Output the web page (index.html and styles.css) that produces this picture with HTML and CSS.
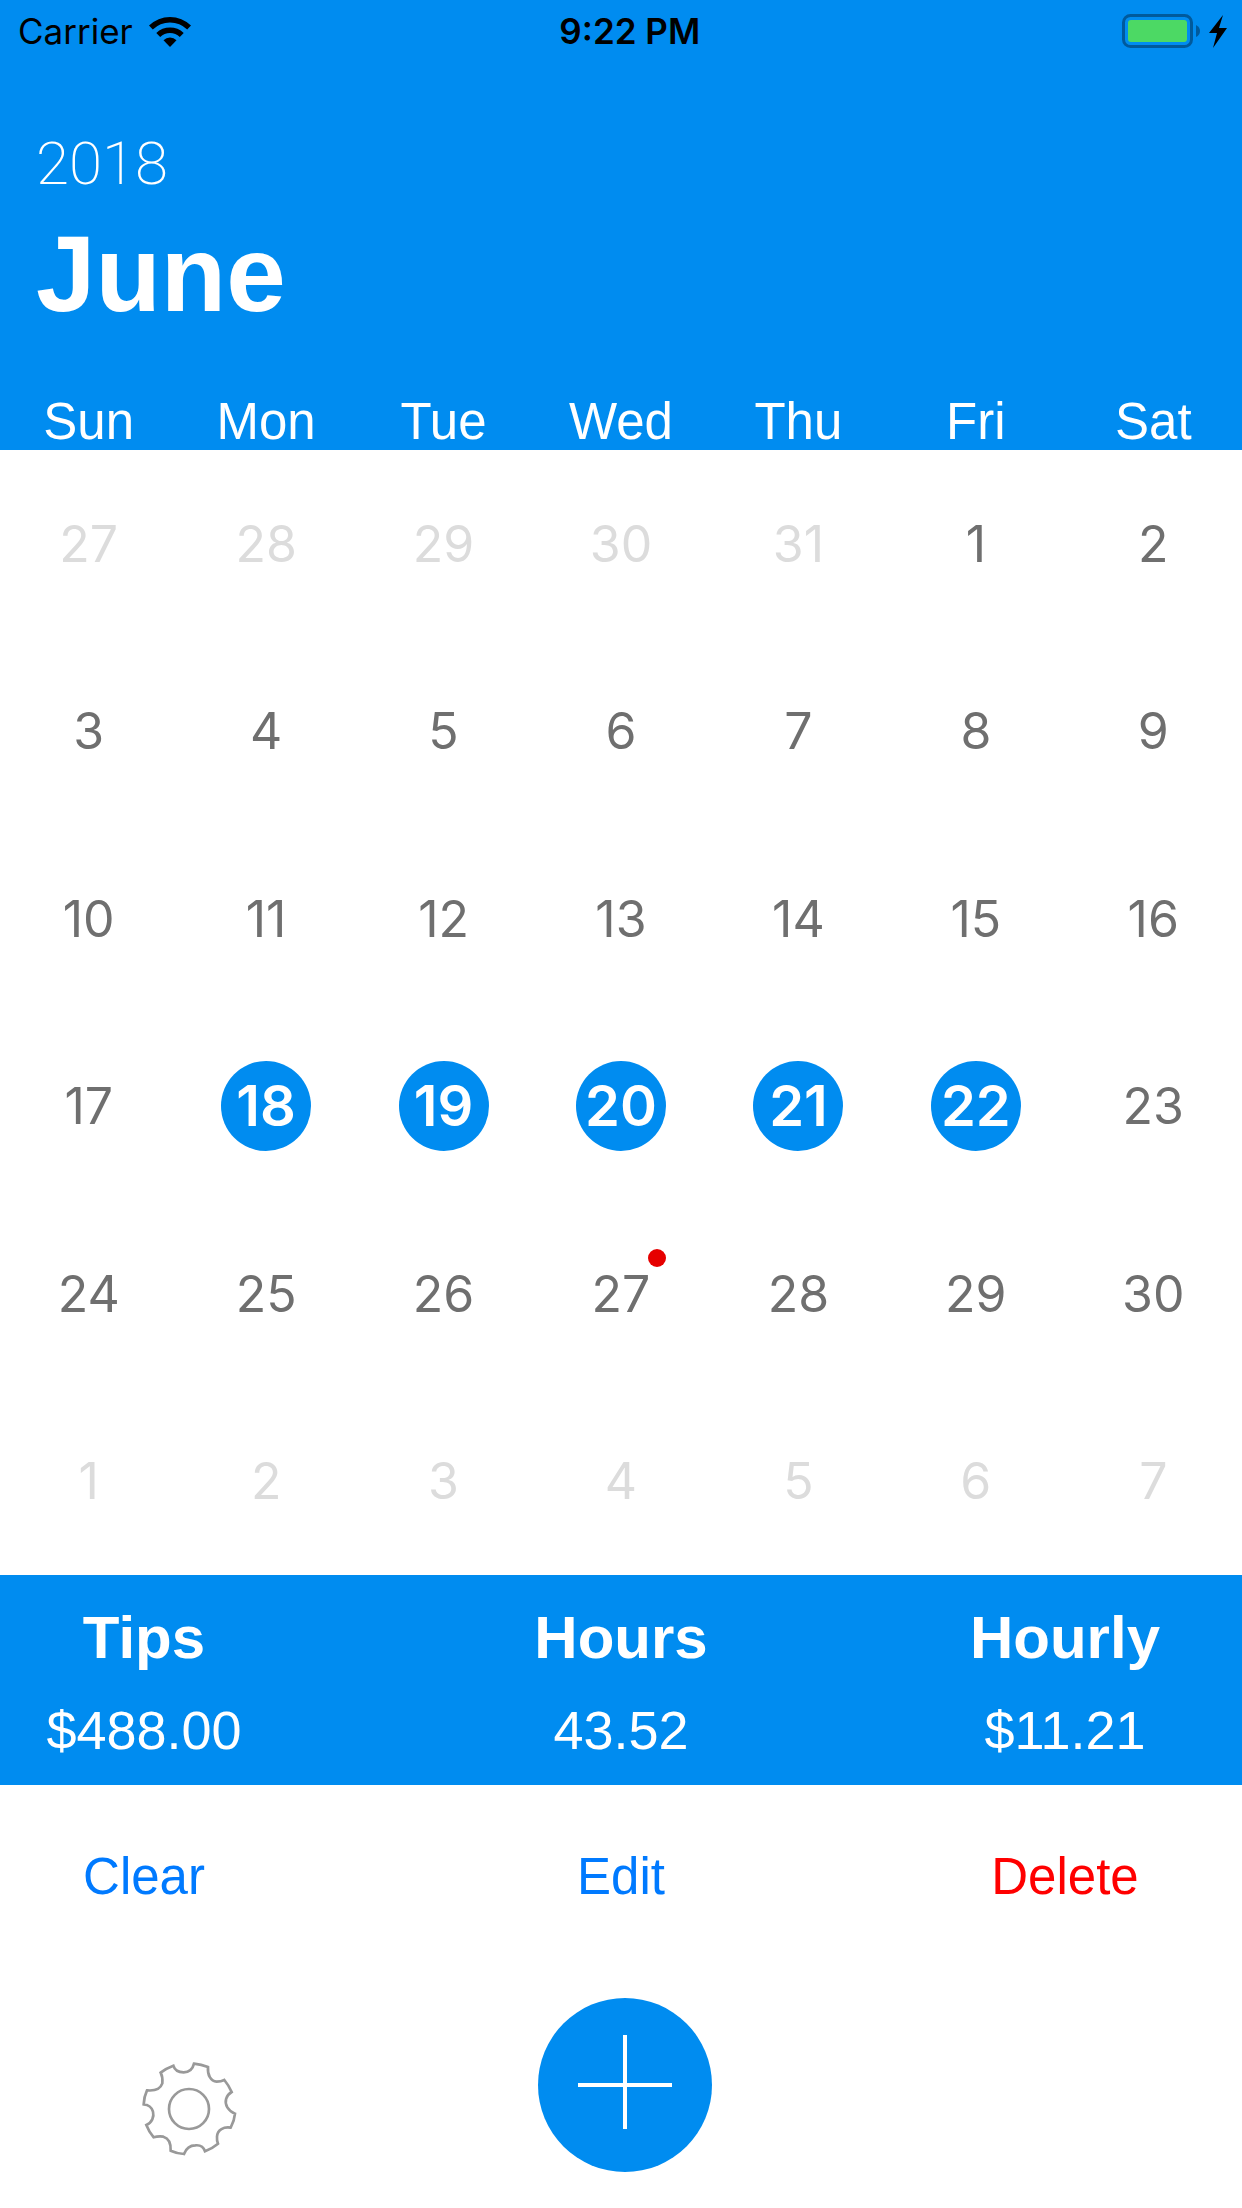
FILE: index.html
```html
<!DOCTYPE html>
<html lang="en">
<head>
<meta charset="utf-8">
<meta name="viewport" content="width=device-width, initial-scale=1">
<title>June 2018</title>
<link rel="stylesheet" href="styles.css">
</head>
<body>
<header class="top">
  <div class="status">
    <div class="status-left">
      <span>Carrier</span>
      <svg class="wifi" viewBox="0 0 42 31" aria-hidden="true">
        <path d="M0 9.500A30 30 0 0 1 42 9.500L38.200 13.500A24.500 24.500 0 0 0 3.800 13.500Z"/>
        <path d="M7.300 17A19.500 19.500 0 0 1 34.700 17L30.800 21A14 14 0 0 0 11.200 21Z"/>
        <path d="M14.500 24.200A9.300 9.300 0 0 1 27.500 24.200L21 31Z"/>
      </svg>
    </div>
    <time class="clock">9:22 PM</time>
    <div class="status-right">
      <svg class="battery" viewBox="0 0 106 36" aria-hidden="true">
        <rect x="1.500" y="2.500" width="68" height="31" rx="7" fill="none" stroke="#005a9c" stroke-width="3"/>
        <rect x="6" y="7" width="59" height="22" rx="3" fill="#4cd964"/>
        <path d="M74 12Q78 14 78 18T74 24Z" fill="#005a9c"/>
        <path d="M101 2L87 20H95L91 35L105 15H97Z"/>
      </svg>
    </div>
  </div>
  <div class="titles">
    <p class="year">2018</p>
    <h1 class="month">June</h1>
  </div>
</header>
<main class="main">
  <table class="calendar">
    <thead>
      <tr><th>Sun</th><th>Mon</th><th>Tue</th><th>Wed</th><th>Thu</th><th>Fri</th><th>Sat</th></tr>
    </thead>
    <tbody>
      <tr class="week">
        <td><button class="day other">27</button></td><td><button class="day other">28</button></td><td><button class="day other">29</button></td><td><button class="day other">30</button></td><td><button class="day other">31</button></td><td><button class="day">1</button></td><td><button class="day">2</button></td>
      </tr>
      <tr class="week">
        <td><button class="day">3</button></td><td><button class="day">4</button></td><td><button class="day">5</button></td><td><button class="day">6</button></td><td><button class="day">7</button></td><td><button class="day">8</button></td><td><button class="day">9</button></td>
      </tr>
      <tr class="week">
        <td><button class="day">10</button></td><td><button class="day">11</button></td><td><button class="day">12</button></td><td><button class="day">13</button></td><td><button class="day">14</button></td><td><button class="day">15</button></td><td><button class="day">16</button></td>
      </tr>
      <tr class="week">
        <td><button class="day">17</button></td><td><button class="day selected">18</button></td><td><button class="day selected">19</button></td><td><button class="day selected">20</button></td><td><button class="day selected">21</button></td><td><button class="day selected">22</button></td><td><button class="day">23</button></td>
      </tr>
      <tr class="week">
        <td><button class="day">24</button></td><td><button class="day">25</button></td><td><button class="day">26</button></td><td><button class="day marked">27</button></td><td><button class="day">28</button></td><td><button class="day">29</button></td><td><button class="day">30</button></td>
      </tr>
      <tr class="week">
        <td><button class="day other">1</button></td><td><button class="day other">2</button></td><td><button class="day other">3</button></td><td><button class="day other">4</button></td><td><button class="day other">5</button></td><td><button class="day other">6</button></td><td><button class="day other">7</button></td>
      </tr>
    </tbody>
  </table>
  <dl class="totals thirds">
    <div class="total"><dt>Tips</dt><dd>$488.00</dd></div>
    <div class="total"><dt>Hours</dt><dd>43.52</dd></div>
    <div class="total"><dt>Hourly</dt><dd>$11.21</dd></div>
  </dl>
  <div class="actions thirds">
    <button class="action">Clear</button>
    <button class="action">Edit</button>
    <button class="action danger">Delete</button>
  </div>
</main>
<footer class="toolbar">
  <button class="settings" aria-label="Settings">
    <svg viewBox="60 60 294 294" aria-hidden="true">
      <g fill="none" stroke="#999" stroke-width="8">
        <path d="M222 71Q244 73 264 81C262 105 272 124 290 125Q303 125 313 120Q327 137 335 156C318 166 312 186 322 202Q331 216 345 221Q343 243 332 263C312 260 292 268 291 290Q290 302 294 311Q276 326 255 334C250 318 236 315 226 316C210 316 198 326 192 342Q172 341 152 332C153 312 150 296 130 290Q115 288 101 292Q87 276 79 255C96 248 103 230 99 215C96 202 84 194 71 193Q72 170 81 151C102 153 120 150 127 130Q129 112 122 98Q140 84 160 77C165 94 180 97 191 97C207 97 218 88 222 71Z"/>
        <circle cx="207" cy="207" r="60"/>
      </g>
    </svg>
  </button>
  <button class="add" aria-label="Add shift">
    <svg viewBox="0 0 100 100" aria-hidden="true"><path d="M50 0V94M3 50H97" stroke="#fff" stroke-width="4"/></svg>
  </button>
</footer>
</body>
</html>
```

FILE: styles.css
```css
* {
  box-sizing: border-box;
  margin: 0;
  padding: 0;
}

:root {
  --blue: #008cf0;
  --sans: "Liberation Sans", Arial, sans-serif;
  --ui: Inter, "Liberation Sans", sans-serif;
}

body {
  display: flex;
  flex-direction: column;
  min-height: 100vh;
  background: #fff;
  font-family: var(--sans);
  font-size: 51px;
}

button {
  border: 0;
  background: none;
  font: inherit;
  color: inherit;
  cursor: pointer;
}

svg {
  display: block;
}

/* Header */
.top {
  background: var(--blue);
  color: #fff;
}

.status {
  display: grid;
  grid-template-columns: 40fr auto 39fr;
  align-items: center;
  height: 60px;
  padding: 0 14px 0 18px;
  font: 400 35px/62px var(--ui);
  color: #000;
}

.status-left {
  display: flex;
  align-items: center;
  gap: 16px;
}

.status-right {
  display: flex;
  justify-content: flex-end;
}

.wifi {
  width: 42px;
  height: 31px;
}

.battery {
  width: 106px;
  height: 36px;
}

.clock {
  font-weight: 600;
}

.titles {
  padding: 68px 36px 56px;
}

.year {
  margin-bottom: 12px;
  font: 200 60px/72px Roboto, sans-serif;
}

.month {
  font-size: 107px;
  line-height: 124px;
}

/* Calendar */
.main {
  display: flex;
  flex-direction: column;
  flex: 1;
}

.calendar {
  display: flex;
  flex-direction: column;
  flex: 1;
}

.calendar thead {
  display: block;
  background: var(--blue);
  color: #fff;
}

.calendar tr {
  display: grid;
  grid-template-columns: repeat(7, 1fr);
}

.calendar th {
  padding-top: 2px;
  font-weight: 400;
  line-height: 56px;
}

.calendar tbody {
  display: grid;
  grid-auto-rows: 1fr;
  flex: 1;
}

.week td {
  display: flex;
  align-items: center;
  justify-content: center;
}

.day {
  position: relative;
  width: 90px;
  height: 90px;
  border-radius: 50%;
  font: 400 50px/90px var(--ui);
  color: #6f6f6f;
}

.day.other {
  color: #dcdcdc;
}

.day.selected {
  background: var(--blue);
  font-size: 56px;
  font-weight: 600;
  color: #fff;
}

.day.marked::after {
  content: "";
  position: absolute;
  top: 0;
  right: 0;
  width: 18px;
  height: 18px;
  border-radius: 50%;
  background: #e60000;
}

/* Totals and actions share one set of columns */
.thirds {
  display: grid;
  grid-template-columns: 48fr 111fr 37fr 11fr;
  text-align: center;
}

.totals {
  padding: 29px 0 25px;
  background: var(--blue);
  color: #fff;
}

.total dt {
  margin-bottom: 28px;
  font-size: 60px;
  font-weight: 700;
  line-height: 68px;
}

.total dd {
  font-size: 54px;
  line-height: 60px;
}

.actions {
  padding: 62px 0 91px;
}

.action {
  line-height: 60px;
  color: #007aff;
}

.action.danger {
  color: #f00;
}

/* Bottom toolbar */
.toolbar {
  display: grid;
  grid-template-columns: 189fr 247fr 185fr;
  align-items: end;
  justify-items: center;
  padding-bottom: 36px;
}

.settings {
  margin-bottom: 14px;
}

.settings svg {
  width: 98px;
  height: 98px;
}

.add {
  display: grid;
  place-items: center;
  width: 174px;
  height: 174px;
  border-radius: 50%;
  background: var(--blue);
}

.add svg {
  width: 100px;
  height: 100px;
}
```
